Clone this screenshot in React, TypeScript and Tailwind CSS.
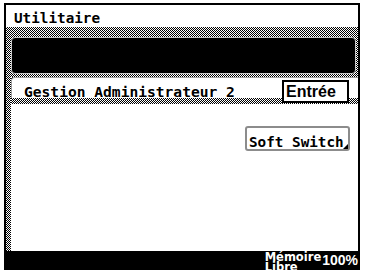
import React from 'react';

const dither = 'bg-[repeating-conic-gradient(#000_0%_25%,#fff_0%_50%)] bg-[length:2px_2px]';
const mono = "font-['DejaVu_Sans_Mono',monospace] font-bold text-black";

export default function App() {
  return (
    <div className="w-[365px] h-[273px] bg-white pt-[3px] pl-[4px] overflow-hidden">
      <div className="w-[356px] h-[248px] border-x-2 border-t-2 border-black flex flex-col">
        <div className={`h-[22px] shrink-0 pl-[8px] pt-[5px] ${mono} text-[14.3px] leading-[16px]`}>
          Utilitaire
        </div>

        <div className={`h-[50px] shrink-0 pl-[5px] pr-[2px] pt-[10px] ${dither}`}>
          <div className="h-[37px] bg-black rounded-[4px] border border-[#c8c8c8]"></div>
        </div>

        <div className="flex flex-1 min-h-0">
          <div className={`w-[5px] shrink-0 ${dither}`}></div>
          <div className="flex-1 flex flex-col">
            <div className={`h-[27px] shrink-0 ${dither}`}>
              <div className="h-[21px] bg-white rounded-tl-[4px] border-l border-t border-[#a0a0a0] flex items-start">
                <span className={`pl-[12px] pt-[6px] ${mono} text-[14.6px] leading-[16px]`}>
                  Gestion Administrateur 2
                </span>
                <button className="ml-auto mr-[9px] mt-[2px] w-[67px] h-[23px] shrink-0 bg-white border-2 border-black text-left pl-[2px] font-['Liberation_Sans',sans-serif] font-bold text-[16px] leading-[18px] text-black">
                  Entrée
                </button>
              </div>
            </div>

            <div className="flex-1 bg-white flex justify-end items-start pt-[22px] pr-[8px]">
              <button className="relative w-[105px] h-[25px] border-2 border-[#8c8c8c] rounded-[3px] bg-white text-left pl-[2px] pt-[1px]">
                <span className={`${mono} text-[14.3px] leading-[16px]`}>Soft Switch</span>
                <span className="absolute right-0 bottom-0 w-0 h-0 border-l-[5px] border-l-transparent border-b-[5px] border-b-black"></span>
              </button>
            </div>
          </div>
        </div>
      </div>

      <div className="w-[356px] h-[19px] bg-black flex justify-end items-start pr-[2px] overflow-hidden">
        <div className="mt-[1px] font-['DejaVu_Sans',sans-serif] font-bold text-[11.5px] leading-[10px] text-white">
          <div>Mémoire</div>
          <div>Libre</div>
        </div>
        <div className="mt-[2px] ml-[1px] font-['Liberation_Sans',sans-serif] font-bold text-[14px] leading-[14px] text-white">
          100%
        </div>
      </div>
    </div>
  );
}
